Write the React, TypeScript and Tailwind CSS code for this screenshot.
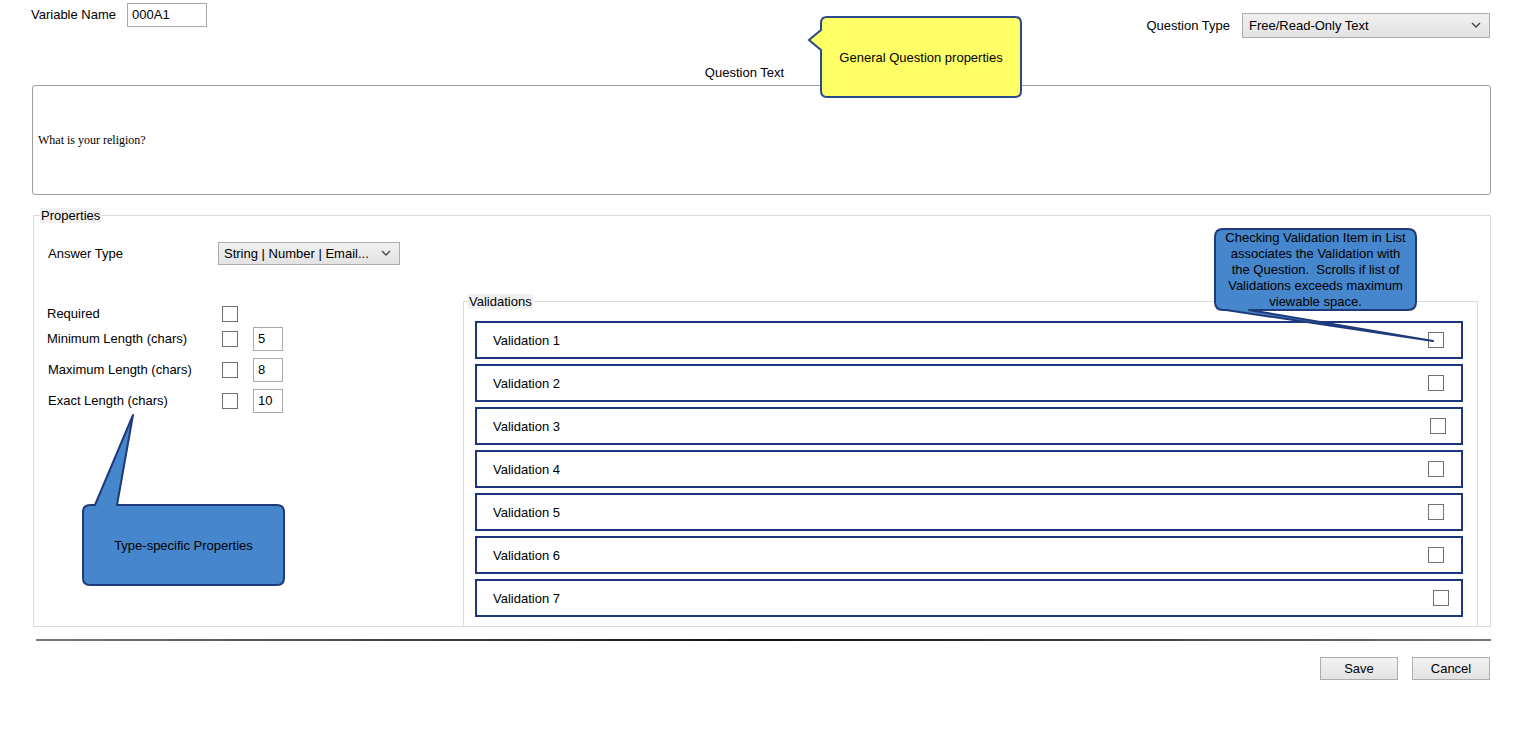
import React from "react";

const Chevron = () => (
  <svg width="10" height="7" viewBox="0 0 10 7" className="shrink-0">
    <polyline points="1,1 5,5 9,1" fill="none" stroke="#444" strokeWidth="1.4" />
  </svg>
);

const Checkbox = ({ className = "" }: { className?: string }) => (
  <div className={"w-[16px] h-[16px] border border-[#707070] bg-white shrink-0 " + className} />
);

const NumInput = ({ v }: { v: string }) => (
  <div className="w-[30px] h-[24px] border border-[#a9a9a9] bg-white flex items-center pl-[4px] text-[13px]">{v}</div>
);

export default function App() {
  const rows = ["Validation 1", "Validation 2", "Validation 3", "Validation 4", "Validation 5", "Validation 6", "Validation 7"];
  return (
    <div className="relative w-[1531px] h-[751px] bg-white text-black text-[13px] font-['Liberation_Sans',Arial,sans-serif] overflow-hidden">
      {/* top row */}
      <div className="flex justify-between items-start pl-[31px] pr-[41px] h-[38px]">
        <div className="flex items-center pt-[3px]">
          <span>Variable Name</span>
          <div className="ml-[11px] w-[80px] h-[24px] border border-[#a9a9a9] flex items-center pl-[4px]">000A1</div>
        </div>
        <div className="flex items-center pt-[13px]">
          <span>Question Type</span>
          <div className="ml-[12px] w-[248px] h-[25px] border border-[#acacac] bg-gradient-to-b from-[#f0f0f0] to-[#e3e3e3] flex items-center justify-between pl-[6px] pr-[8px]">
            <span>Free/Read-Only Text</span>
            <Chevron />
          </div>
        </div>
      </div>

      <div className="mt-[27px] h-[16px] leading-[16px] text-center">
        <span className="relative left-[-21px]">Question Text</span>
      </div>

      <div className="mt-[4px] ml-[32px] w-[1459px] h-[110px] border border-[#a39e95] rounded-[3px] flex items-center pl-[5px] font-['Liberation_Serif','Times_New_Roman',serif] text-[12px]">
        What is your religion?
      </div>

      {/* Properties */}
      <fieldset className="mt-[13px] ml-[33px] w-[1458px] h-[419px] border border-[#dcdcdc]">
        <legend className="ml-[6px] px-[1px] bg-[#f0f0f0] leading-[15px]">Properties</legend>
        <div className="mt-[19px] flex items-center h-[23px] pl-[14px]">
          <span className="w-[170px]">Answer Type</span>
          <div className="w-[182px] h-[23px] border border-[#acacac] bg-gradient-to-b from-[#f0f0f0] to-[#e3e3e3] flex items-center justify-between pl-[5px] pr-[8px]">
            <span>String | Number | Email...</span>
            <Chevron />
          </div>
        </div>
        <div className="mt-[29px] flex">
          <div className="w-[429px] pl-[13px] flex flex-col">
            <div className="mt-[12px] h-[16px] flex items-center">
              <span className="w-[175px]">Required</span>
              <Checkbox />
            </div>
            <div className="mt-[5px] h-[24px] flex items-center">
              <span className="w-[175px]">Minimum Length (chars)</span>
              <Checkbox />
              <div className="ml-[15px]"><NumInput v="5" /></div>
            </div>
            <div className="mt-[7px] h-[24px] flex items-center">
              <span className="w-[175px] pl-[1px]">Maximum Length (chars)</span>
              <Checkbox />
              <div className="ml-[15px]"><NumInput v="8" /></div>
            </div>
            <div className="mt-[7px] h-[24px] flex items-center">
              <span className="w-[175px] pl-[1px]">Exact Length (chars)</span>
              <Checkbox />
              <div className="ml-[15px]"><NumInput v="10" /></div>
            </div>
          </div>
          <fieldset className="w-[1015px] h-[332px] border border-b-0 border-[#dcdcdc]">
            <legend className="ml-[4px] px-[1px] bg-[#f0f0f0] leading-[15px]">Validations</legend>
            <div className="mt-[12px] ml-[11px] w-[988px] flex flex-col gap-[5px]">
              {rows.map((r, i) => (
                <div key={r} className="h-[38px] border-2 border-[#1c3580] flex items-center justify-between pl-[16px] pr-[17px]">
                  <span className="relative top-[1px]">{r}</span>
                  <Checkbox className={i === 6 ? "relative left-[5px]" : i === 2 ? "relative left-[2px]" : ""} />
                </div>
              ))}
            </div>
          </fieldset>
        </div>
      </fieldset>

      {/* separator */}
      <div className="mt-[12px] ml-[36px] w-[1455px] h-[2px] bg-gradient-to-r from-[#7a7a7a] via-[#111] to-[#777]" />

      {/* buttons */}
      <div className="mt-[16px] flex justify-end gap-[14px] pr-[41px]">
        <button className="w-[78px] h-[23px] border border-[#adadad] bg-gradient-to-b from-[#f3f3f3] to-[#e2e2e2] text-[13px]">Save</button>
        <button className="w-[78px] h-[23px] border border-[#adadad] bg-gradient-to-b from-[#f3f3f3] to-[#e2e2e2] text-[13px]">Cancel</button>
      </div>

      {/* Yellow callout */}
      <svg className="absolute left-[805px] top-[14px]" width="220" height="86" viewBox="0 0 220 86">
        <path d="M 22 3 H 210 Q 216 3 216 9 V 77 Q 216 83 210 83 H 22 Q 16 83 16 77 V 36 L 4 26 L 16 16 V 9 Q 16 3 22 3 Z" fill="#ffff66" stroke="#2b4a8b" strokeWidth="2" />
      </svg>
      <div className="absolute left-[821px] top-[18px] w-[200px] h-[80px] flex items-center justify-center">
        General Question properties
      </div>

      {/* Blue top-right callout */}
      <svg className="absolute left-[1205px] top-[225px]" width="240" height="125" viewBox="0 0 240 125">
        <path d="M 18 4 H 203 Q 211 4 211 12 V 77 Q 211 85 203 85 H 44 L 228 116 L 21 85 H 18 Q 10 85 10 77 V 12 Q 10 4 18 4 Z" fill="#4686cc" stroke="#1f3a7a" strokeWidth="2" strokeLinejoin="round" />
      </svg>
      <div className="absolute left-[1215px] top-[230px] w-[201px] text-center leading-[16px]">
        Checking Validation Item in List<br />associates the Validation with<br />the Question.&nbsp; Scrolls if list of<br />Validations exceeds maximum<br />viewable space.
      </div>

      {/* Blue bottom-left callout */}
      <svg className="absolute left-[78px] top-[410px]" width="212" height="180" viewBox="0 0 212 180">
        <path d="M 12 95 H 17 L 55 5 L 39 95 H 199 Q 206 95 206 102 V 168 Q 206 175 199 175 H 12 Q 5 175 5 168 V 102 Q 5 95 12 95 Z" fill="#4686cc" stroke="#1f3a7a" strokeWidth="2" strokeLinejoin="round" />
      </svg>
      <div className="absolute left-[83px] top-[506px] w-[201px] h-[80px] flex items-center justify-center">
        Type-specific Properties
      </div>
    </div>
  );
}
